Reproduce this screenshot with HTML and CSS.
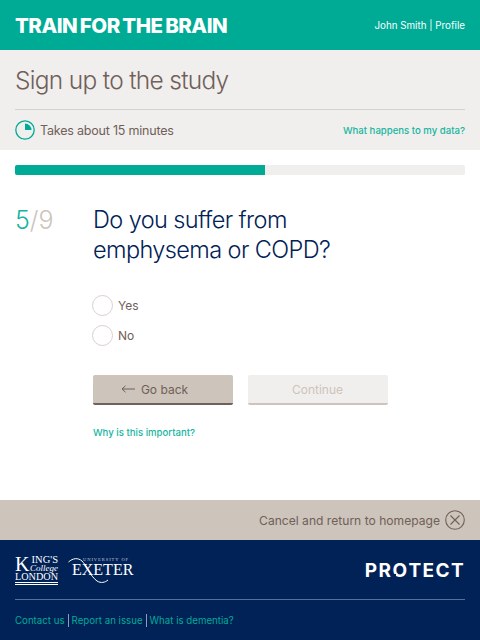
FILE: index.html
```html
<!DOCTYPE html>
<html lang="en">
<head>
    <meta charset="UTF-8">
    <title>Train for the Brain</title>
    <link rel="stylesheet" href="styles.css">
</head>
<body>
    <header class="topbar">
        <div class="brand">TRAIN FOR THE BRAIN</div>
        <div class="user"><a href="#">John Smith</a> | <a href="#">Profile</a></div>
    </header>

    <section class="intro">
        <h1>Sign up to the study</h1>
        <div class="intro-row">
            <div class="duration">
                <svg class="clock" width="20" height="20" viewBox="0 0 20 20">
                    <circle cx="10" cy="10" r="9.2" fill="none" stroke="#00ab96" stroke-width="1.3"/>
                    <path d="M10 3.5 A6.5 6.5 0 0 1 16.5 10 L10 10 Z" fill="#00ab96"/>
                </svg>
                <span>Takes about 15 minutes</span>
            </div>
            <a class="link" href="#">What happens to my data?</a>
        </div>
    </section>

    <div class="progress"><div class="progress-fill" style="width: 55.56%"></div></div>

    <main class="question">
        <div class="step"><span class="step-now">5</span><span class="step-total">/9</span></div>
        <div class="question-body">
            <h2>Do you suffer from<br>emphysema or COPD?</h2>
            <div class="options">
                <label class="option"><span class="radio"></span>Yes</label>
                <label class="option"><span class="radio"></span>No</label>
            </div>
            <div class="buttons">
                <button class="btn btn-back"><span class="arrow">
                    <svg width="14" height="8" viewBox="0 0 14 8"><path d="M14 4H1M4.5 .8 1 4l3.5 3.2" fill="none" stroke="#6f6059" stroke-width="1"/></svg>
                </span>Go back</button>
                <button class="btn btn-next">Continue</button>
            </div>
            <a class="link link-why" href="#">Why is this important?</a>
        </div>
    </main>

    <div class="cancel">
        <span>Cancel and return to homepage</span>
        <svg width="20" height="20" viewBox="0 0 20 20">
            <circle cx="10" cy="10" r="9.3" fill="none" stroke="#6f6059" stroke-width="1.1"/>
            <path d="M5.5 5.5 14.5 14.5M14.5 5.5 5.5 14.5" stroke="#6f6059" stroke-width="1.1"/>
        </svg>
    </div>

    <footer class="footer">
        <div class="logos">
            <div class="logo-group">
                <div class="kings">
                    <div class="kings-top">
                        <span class="kings-k">K</span>
                        <div class="kings-side"><span>ING'S</span><em>College</em></div>
                    </div>
                    <div class="kings-london">LONDON</div>
                </div>
                <div class="exeter">
                    <div class="exeter-top">UNIVERSITY OF</div>
                    <div class="exeter-name">EXETER</div>
                    <svg class="exeter-swoosh" width="42" height="28" viewBox="0 0 42 28">
                        <path d="M.5 6C5 2 10 1.500 14 5S22 20 29 25C33 27.500 37 26.500 40 24" fill="none" stroke="#fff" stroke-width="1"/>
                    </svg>
                </div>
            </div>
            <div class="protect">PR<span class="protect-o">O</span>TECT</div>
        </div>
        <div class="footer-links">
            <a href="#">Contact us</a><span class="sep"></span><a href="#">Report an issue</a><span class="sep"></span><a href="#">What is dementia?</a>
        </div>
    </footer>
</body>
</html>
```

FILE: styles.css
```css
:root {
    --teal: #00ab96;
    --navy: #012257;
    --sand: #cdc4bb;
    --paper: #f1efed;
    --brown: #6f6059;
}

* {
    box-sizing: border-box;
}

body {
    margin: 0;
    height: 640px;
    display: flex;
    flex-direction: column;
    background: #fff;
    font-family: 'Inter', sans-serif;
    color: var(--brown);
}

a {
    color: inherit;
    text-decoration: none;
}

.topbar {
    height: 50px;
    padding: 0 15px;
    display: flex;
    align-items: center;
    justify-content: space-between;
    background: var(--teal);
    color: #fff;
}

.brand {
    font-size: 20.5px;
    font-weight: 800;
    letter-spacing: -0.5px;
    word-spacing: -1.4px;
}

.user {
    font-size: 9.8px;
}

.intro {
    height: 100px;
    padding: 0 15px;
    background: var(--paper);
}

.intro h1 {
    margin: 0;
    height: 60px;
    border-bottom: 1px solid #d6d0ca;
    font-size: 24.5px;
    font-weight: 300;
    letter-spacing: -0.7px;
    line-height: 60px;
}

.intro-row {
    height: 40px;
    display: flex;
    align-items: center;
    justify-content: space-between;
}

.duration {
    display: flex;
    align-items: center;
    gap: 5px;
    font-size: 12.5px;
    letter-spacing: -0.2px;
}

.link {
    color: #16b59f;
    font-size: 9.6px;
    font-weight: 500;
}

.progress {
    height: 10px;
    margin: 15px 15px 0;
    border-radius: 2px;
    background: var(--paper);
    overflow: hidden;
}

.progress-fill {
    height: 100%;
    background: var(--teal);
}

.question {
    flex: 1;
    display: flex;
    padding: 30px 15px 0;
}

.step {
    width: 78px;
    font-size: 25px;
    font-weight: 300;
    line-height: 30px;
}

.step-now {
    color: #16b59f;
}

.step-total {
    color: var(--sand);
}

.question-body {
    flex: 1;
}

.question h2 {
    margin: 0;
    color: var(--navy);
    font-size: 23.5px;
    font-weight: 300;
    letter-spacing: -0.6px;
    line-height: 30px;
}

.options {
    margin-top: 30px;
    display: flex;
    flex-direction: column;
    gap: 10px;
}

.option {
    height: 20px;
    display: flex;
    align-items: center;
    gap: 5px;
    margin-left: -1px;
    font-size: 12px;
}

.radio {
    width: 21px;
    height: 21px;
    border: 1px solid #d8d1ca;
    border-radius: 50%;
    background: #fff;
}

.buttons {
    margin-top: 30px;
    margin-left: -0.5px;
    display: flex;
    gap: 15px;
}

.btn {
    width: 140px;
    height: 30px;
    padding: 0;
    border: 0;
    border-radius: 2px;
    display: flex;
    align-items: center;
    justify-content: center;
    font-family: inherit;
    font-size: 12px;
}

.btn-back {
    padding-right: 16px;
    background: var(--sand);
    border-bottom: 2px solid var(--brown);
    color: var(--brown);
}

.arrow {
    display: flex;
    margin-right: 6px;
}

.btn-next {
    background: var(--paper);
    border-bottom: 2px solid var(--sand);
    color: var(--sand);
}

.link-why {
    display: block;
    margin-top: 22px;
}

.cancel {
    height: 40px;
    padding: 0 15px;
    display: flex;
    align-items: center;
    justify-content: flex-end;
    gap: 5px;
    background: var(--sand);
    font-size: 12.1px;
}

.footer {
    height: 100px;
    padding: 0 15px;
    background: var(--navy);
}

.logos {
    height: 60px;
    display: flex;
    align-items: center;
    justify-content: space-between;
    border-bottom: 1px solid #5a6f93;
    color: #fff;
}

.logo-group {
    display: flex;
    align-items: center;
    gap: 11px;
    font-family: 'Liberation Serif', serif;
}

.kings {
    width: 43px;
    height: 30px;
    border-bottom: 3px double #fff;
}

.kings-top {
    display: flex;
    height: 17px;
}

.kings-k {
    width: 15px;
    font-size: 20px;
    line-height: 18px;
}

.kings-side {
    display: flex;
    flex-direction: column;
    align-items: flex-end;
    flex: 1;
}

.kings-side span {
    font-size: 10.5px;
    line-height: 9px;
}

.kings-side em {
    font-size: 9px;
    line-height: 8px;
}

.kings-london {
    font-size: 10.2px;
    line-height: 10px;
}

.exeter {
    position: relative;
    width: 65px;
    height: 28px;
    padding-left: 3px;
}

.exeter-top {
    padding-left: 11px;
    font-size: 4.5px;
    letter-spacing: 0.95px;
    line-height: 7px;
    color: #c4cbd8;
    white-space: nowrap;
}

.exeter-name {
    font-size: 16px;
    line-height: 13px;
}

.exeter-swoosh {
    position: absolute;
    left: -1px;
    top: 0;
}

.protect {
    margin-top: 1px;
    font-size: 19px;
    font-weight: 700;
    letter-spacing: 1.4px;
}

.protect-o {
    position: relative;
}

/* the gap in the logo's O */
.protect-o::after {
    content: "";
    position: absolute;
    left: 1px;
    bottom: 4px;
    width: 3px;
    height: 4px;
    background: var(--navy);
}

.footer-links {
    height: 40px;
    display: flex;
    align-items: center;
    color: var(--teal);
    font-size: 9.7px;
}

.sep {
    width: 1px;
    height: 13px;
    margin: 0 3px;
    background: #8e9cb5;
}
```
